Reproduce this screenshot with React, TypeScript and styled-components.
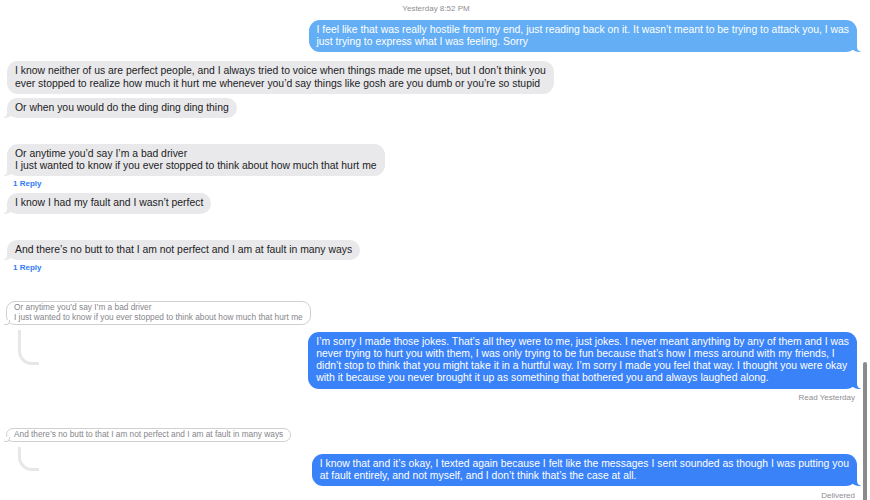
import styled, { createGlobalStyle, css } from 'styled-components';

const GlobalStyle = createGlobalStyle`
  html, body {
    margin: 0;
    padding: 0;
    background: #ffffff;
  }
  body {
    font-family: 'Liberation Sans', Arial, sans-serif;
    -webkit-font-smoothing: antialiased;
  }
`;

const Page = styled.div`
  position: relative;
  width: 870px;
  height: 500px;
  overflow: hidden;
  background: #ffffff;
`;

const Transcript = styled.div`
  display: flex;
  flex-direction: column;
  padding: 4px 13px 0 7px;
`;

const Stamp = styled.div`
  align-self: center;
  font-size: 8px;
  line-height: 10px;
  color: #8e8e93;
  margin-right: -8px;
  b {
    font-weight: 400;
    color: #8e8e93;
  }
`;

type BubbleProps = { $from: 'me' | 'them'; $faded?: boolean; $tail?: boolean; $gap?: number };

const tailFor = (side: 'left' | 'right', color: string) => css`
  &::before {
    content: '';
    position: absolute;
    bottom: 0;
    ${side}: -4px;
    width: 10px;
    height: 10px;
    background: ${color};
    ${side === 'right' ? 'border-bottom-left-radius: 8px 6px;' : 'border-bottom-right-radius: 8px 6px;'}
  }
  &::after {
    content: '';
    position: absolute;
    bottom: 0;
    ${side}: -10px;
    width: 10px;
    height: 10px;
    background: #ffffff;
    ${side === 'right' ? 'border-bottom-left-radius: 5px;' : 'border-bottom-right-radius: 5px;'}
  }
`;

const Bubble = styled.div<BubbleProps>`
  position: relative;
  box-sizing: border-box;
  padding: 4px 8px;
  border-radius: 11px;
  font-size: 10.4px;
  line-height: 12.2px;
  white-space: pre;
  margin-top: ${(p) => p.$gap ?? 0}px;
  align-self: ${(p) => (p.$from === 'me' ? 'flex-end' : 'flex-start')};
  background: ${(p) => (p.$from === 'me' ? (p.$faded ? '#63aef5' : '#3a82f7') : '#e9e9eb')};
  color: ${(p) => (p.$from === 'me' ? '#ffffff' : '#1c1c1e')};
  ${(p) =>
    p.$tail &&
    tailFor(p.$from === 'me' ? 'right' : 'left', p.$from === 'me' ? (p.$faded ? '#63aef5' : '#3a82f7') : '#e9e9eb')}
`;

const ReplyLink = styled.div`
  align-self: flex-start;
  margin: 3px 0 0 6px;
  font-size: 8px;
  line-height: 10px;
  font-weight: 700;
  color: #2f7cf6;
`;

const Status = styled.div<{ $gap: number }>`
  align-self: flex-end;
  margin: ${(p) => p.$gap}px 2px 0 0;
  font-size: 8px;
  line-height: 10px;
  color: #8e8e93;
`;

const Quote = styled.div<{ $gap: number }>`
  position: relative;
  align-self: flex-start;
  margin: ${(p) => p.$gap}px 0 0 -1px;
  padding: 0.5px 7px 1.5px;
  border: 1px solid #d0d0d2;
  border-radius: 9px;
  font-size: 8.3px;
  line-height: 10px;
  color: #86868b;
  white-space: pre;
  &::before {
    content: '';
    position: absolute;
    left: -3px;
    bottom: -1px;
    width: 5px;
    height: 4px;
    border-bottom: 1px solid #d0d0d2;
    border-right: 1px solid #d0d0d2;
    border-bottom-right-radius: 4px;
    background: #ffffff;
  }
`;

const ThreadRow = styled.div`
  display: flex;
  justify-content: space-between;
  align-items: flex-start;
`;

const ThreadLine = styled.div<{ $h: number }>`
  flex: none;
  margin: 5px 0 0 11px;
  width: 21px;
  height: ${(p) => p.$h}px;
  border-left: 3px solid #e7e7e9;
  border-bottom: 3px solid #e7e7e9;
  border-bottom-left-radius: 14px;
  box-sizing: border-box;
`;

const Scrollbar = styled.div`
  position: absolute;
  right: 3px;
  top: 362px;
  width: 4px;
  height: 150px;
  border-radius: 2px;
  background: #8b8b8b;
`;

export default function App() {
  return (
    <Page>
      <GlobalStyle />
      <Transcript>
        <Stamp>
          Yesterday <b>8:52 PM</b>
        </Stamp>
        <Bubble $from="me" $faded $tail $gap={6}>
          {'I feel like that was really hostile from my end, just reading back on it. It wasn\u2019t meant to be trying to attack you, I was\njust trying to express what I was feeling. Sorry'}
        </Bubble>
        <Bubble $from="them" $gap={9}>
          {'I know neither of us are perfect people, and I always tried to voice when things made me upset, but I don\u2019t think you\never stopped to realize how much it hurt me whenever you\u2019d say things like gosh are you dumb or you\u2019re so stupid'}
        </Bubble>
        <Bubble $from="them" $tail $gap={4}>
          Or when you would do the ding ding ding thing
        </Bubble>
        <Bubble $from="them" $tail $gap={26}>
          {'Or anytime you\u2019d say I\u2019m a bad driver\nI just wanted to know if you ever stopped to think about how much that hurt me'}
        </Bubble>
        <ReplyLink>1 Reply</ReplyLink>
        <Bubble $from="them" $tail $gap={4}>
          I know I had my fault and I wasn’t perfect
        </Bubble>
        <Bubble $from="them" $tail $gap={26}>
          And there’s no butt to that I am not perfect and I am at fault in many ways
        </Bubble>
        <ReplyLink>1 Reply</ReplyLink>
        <Quote $gap={28}>
          {'Or anytime you\u2019d say I\u2019m a bad driver\nI just wanted to know if you ever stopped to think about how much that hurt me'}
        </Quote>
        <ThreadRow>
          <ThreadLine $h={35} />
          <Bubble $from="me" $tail $gap={7}>
            {'I\u2019m sorry I made those jokes. That\u2019s all they were to me, just jokes. I never meant anything by any of them and I was\nnever trying to hurt you with them, I was only trying to be fun because that\u2019s how I mess around with my friends, I\ndidn\u2019t stop to think that you might take it in a hurtful way. I\u2019m sorry I made you feel that way. I thought you were okay\nwith it because you never brought it up as something that bothered you and always laughed along.'}
          </Bubble>
        </ThreadRow>
        <Status $gap={4}>Read Yesterday</Status>
        <Quote $gap={25}>And there’s no butt to that I am not perfect and I am at fault in many ways</Quote>
        <ThreadRow>
          <ThreadLine $h={24} />
          <Bubble $from="me" $tail $gap={12}>
            {'I know that and it\u2019s okay, I texted again because I felt like the messages I sent sounded as though I was putting you\nat fault entirely, and not myself, and I don\u2019t think that\u2019s the case at all.'}
          </Bubble>
        </ThreadRow>
        <Status $gap={5}>Delivered</Status>
      </Transcript>
      <Scrollbar />
    </Page>
  );
}
